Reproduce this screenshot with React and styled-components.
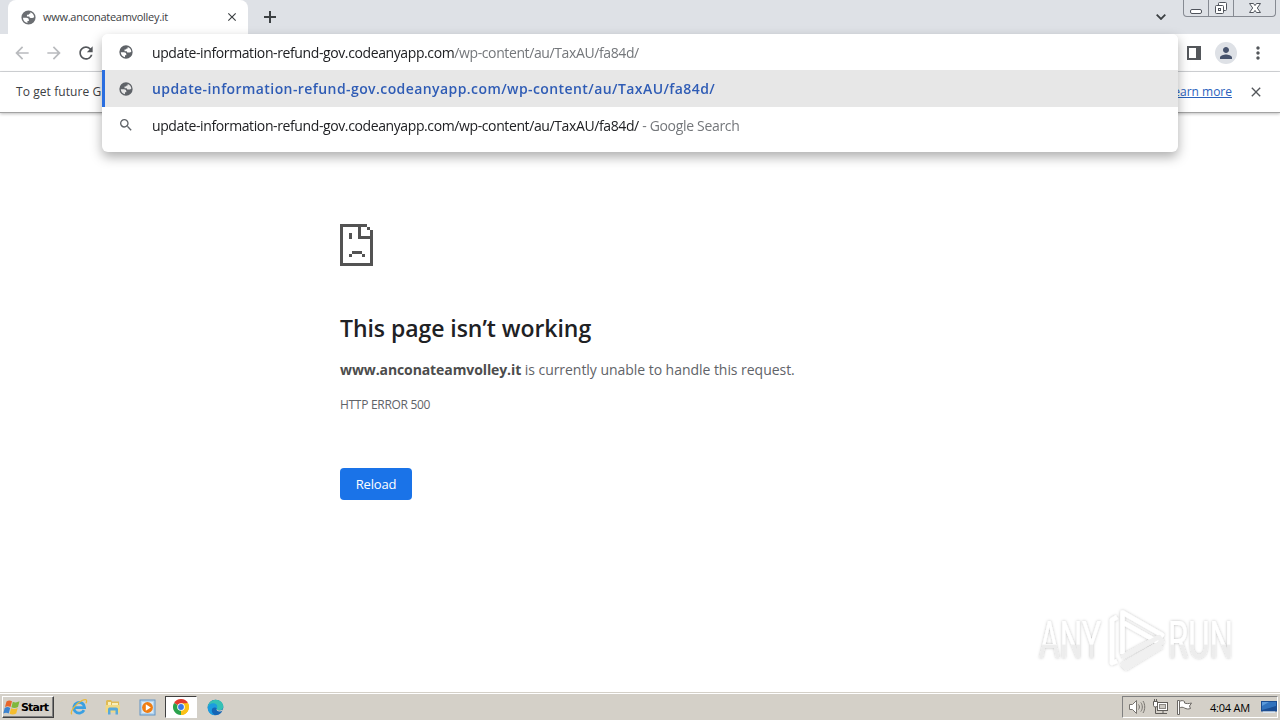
import React from 'react'
import styled, { createGlobalStyle } from 'styled-components';
import { MdSearch, MdRefresh, MdArrowBack, MdArrowForward, MdClose, MdPerson, MdMoreVert } from 'react-icons/md';

const GlobalStyle = createGlobalStyle`
  * {
    box-sizing: border-box;
  }
  body {
    margin: 0;
    overflow: hidden;
    background: #fff;
    font-family: "Open Sans", "Noto Sans", sans-serif;
  }
`

const suggestHost = 'update-information-refund-gov.codeanyapp.com'
const suggestPath = '/wp-content/au/TaxAU/fa84d/'

// Icons
function Globe({ size, color = '#5f6368' }) {
  return (
    <svg width={size} height={size} viewBox="0 0 24 24" fill={color}>
      <path
        d="M12 2a10 10 0 1 0 0 20 10 10 0 0 0 0-20zM4.200 12.500H9c2 0 3.500 1.300 3.500 3v1.300h-2v3.100a8 8 0 0 1-6.300-7.400zM14.500 4.500A8 8 0 0 1 20 11.300c-.8.9-1.600 1.400-2.700 1.400h-2.300c-1.200 0-1.800-.9-1.800-2H9.800V8.200h1.500c1 0 1.500-.6 1.500-1.500h1.700z"
        fillRule="evenodd"
      />
    </svg>
  )
}

function CaptionIcons({ kind }) {
  return (
    <svg width="16" height="14" viewBox="0 0 16 14" fill="#fff" stroke="#50545c">
      {kind === 'min' && <rect x="2.5" y="8.5" width="11" height="4" rx="1.5" />}
      {kind === 'max' && (
        <>
          <rect x="5.5" y="1.5" width="8" height="8" rx="1" />
          <rect x="2.5" y="4.5" width="8" height="8" rx="1" />
          <rect x="5.5" y="7.5" width="2" height="2" />
        </>
      )}
      {kind === 'close' && (
        <path d="M2.5 2.5h4L8 4.6l1.500-2.100h4L10.300 7l3.200 4.500h-4L8 9.400l-1.500 2.100h-4L5.700 7z" />
      )}
    </svg>
  )
}

function SadPage() {
  return (
    <svg width="33" height="42" viewBox="0 0 11 14" fill="#535353" shapeRendering="crispEdges">
      <path d="M0 0h9v1H7v3h3V2h1v12H0zM1 1v12h9V5H6V1z" fillRule="evenodd" />
      <path d="M9 1h1v1H9zM3 3h1v2H3zM4 9h3.330v1H4zM3 10h1v1H3zM7.330 10h1v1h-1z" />
    </svg>
  )
}

function WindowsFlag() {
  return (
    <svg width="18" height="17" viewBox="0 0 18 17">
      <path d="M3.500 2.500C5.500 1 7.300 1.300 9 2.300L7.500 8C5.600 7 4 7 2 8z" fill="#e8662b" />
      <path d="M9.800 2.700c2 1 4 1 6.700-.4L15 8c-2.300 1.200-4.500 1.300-6.600.3z" fill="#7fb83c" />
      <path d="M1.700 8.900c2-1.100 3.700-1 5.500 0l-1.500 5.500c-1.800-1-3.500-1-5.400 0z" fill="#3d83cf" />
      <path d="M8.100 9.300c2.200 1 4.300.9 6.600-.3l-1.500 5.600c-2.300 1.200-4.500 1.200-6.600.2z" fill="#f5bd2d" />
    </svg>
  )
}

function ExplorerE() {
  return (
    <svg width="18" height="18" viewBox="0 0 18 18" fill="none">
      <path d="M14 12.200A5.400 5.400 0 1 1 14.600 9.700H5" stroke="#3aa0e2" strokeWidth="2.800" />
      <path d="M2 16.300C-.8 14 6 5.500 12 2.500c4-2 5.500-.8 4 2.800" stroke="#e9b93a" strokeWidth="1.300" />
    </svg>
  )
}

function FolderIcon() {
  return (
    <svg width="18" height="18" viewBox="0 0 18 18">
      <path d="M2 3l1-1h4l1 1.500h7V14H2z" fill="#e0bb55" />
      <path d="M4 4h3v4H4zM8 5h6v4H8z" fill="#f8efbb" />
      <path d="M1.500 7h14.500v7.500H1.500z" fill="#f1d983" />
      <path d="M4 16.500v-5C4 10 5 9.500 6 9.500h6c1.300 0 2 .7 2 2v5h-2.500v-4h-5v4z" fill="#58a9da" />
    </svg>
  )
}

function MediaIcon() {
  return (
    <svg width="17" height="17" viewBox="0 0 17 17">
      <rect x="1" y="1" width="15" height="15" fill="#b6d5ee" stroke="#6294c4" />
      <rect x="3" y="3" width="11" height="11" fill="#dceaf5" />
      <circle cx="8.500" cy="8.500" r="5.400" fill="#ef7d12" />
      <path d="M6.800 5.300v6.400l5-3.200z" fill="#fff" />
    </svg>
  )
}

function ChromeIcon() {
  return (
    <svg width="16" height="16" viewBox="0 0 16 16">
      <path d="M8 8L1.070 4A8 8 0 0 1 14.930 4z" fill="#e33b2e" />
      <path d="M8 8l6.930-4A8 8 0 0 1 8 16z" fill="#fbc116" />
      <path d="M8 8v8A8 8 0 0 1 1.070 4z" fill="#2ba24c" />
      <path d="M8 4.300h7.050A8 8 0 0 1 8 16l3.200-6.150z" fill="#fbc116" />
      <circle cx="8" cy="8" r="3.800" fill="#fff" />
      <circle cx="8" cy="8" r="2.900" fill="#3b78e7" />
    </svg>
  )
}

function EdgeIcon() {
  return (
    <svg width="17" height="17" viewBox="0 0 17 17">
      <circle cx="8.500" cy="8.500" r="7.800" fill="#1565b5" />
      <path d="M.7 8.500C1.200 3.500 4.500.7 8.700.7c4.600 0 7.600 3.300 7.600 6.700 0 2.500-2 4-4.200 4-1.800 0-2.700-.8-2.300-1.500.7-1.200.2-3.700-3-3.900C4 5.900 1.500 7 .7 8.500z" fill="#35c1b5" />
      <path d="M.7 8.500C1.500 5.500 4 4 6.800 4.300 10 4.600 11 7.500 9.800 9.900c-1-2-5-1.800-5 1.600 0 2 1.300 3.800 3 4.700C3.500 16.300.5 12.500.7 8.500z" fill="#1c9cdf" />
      <path d="M9.600 9.600c-.6 2 1.300 3.200 3.600 3.000 1.200-.1 2.300-.6 3.800-1.500V9.500c-1.500 1.800-3.300 2-4.900 1.900-1.500 0-2.600-.6-2.500-1.800z" fill="#d4d0c8" />
    </svg>
  )
}

function SpeakerIcon() {
  return (
    <svg width="18" height="16" viewBox="0 0 18 16" fill="none" stroke="#77746f">
      <path d="M1.500 5.500h3l4-4v13l-4-4h-3z" fill="#fff" />
      <path d="M10.500 5.500c1.200 1.500 1.200 3.500 0 5M12.800 3.500c2 2.500 2 6.500 0 9M15 2c2.300 3.500 2.300 8.500 0 12" />
    </svg>
  )
}

function NetworkIcon() {
  return (
    <svg width="18" height="16" viewBox="0 0 18 16" fill="#fff" stroke="#5f5c58">
      <rect x="5.500" y="3.500" width="10" height="8" />
      <rect x="7.500" y="5.500" width="6" height="4" fill="#cbc8c2" stroke="#8b8883" />
      <path d="M7 14.500h8M11 12v2M3.500 8v6.500H7" fill="none" />
      <path d="M1.500 2.500h4v4l-1 1.500h-2l-1-1.500zM2.500 0v2M4.500 0v2" />
    </svg>
  )
}

function FlagIcon() {
  return (
    <svg width="17" height="16" viewBox="0 0 17 16" fill="#fff" stroke="#6b6864">
      <path d="M1.500 15.500v-14h2v14z" />
      <path d="M3.500 2.500c2-1.300 3.500-1 5 0v1.500c2 .8 4 .8 7 0l-2 3 1 2.500c-2 .8-4 .6-6-.5-1.500-1-3.500-1-5 0z" />
    </svg>
  )
}

function DesktopIcon() {
  return (
    <svg width="16" height="14" viewBox="0 0 16 14">
      <rect x="0" y="1" width="16" height="10.500" fill="#1b4d92" />
      <path d="M1 2h14v4L1 10z" fill="#3172bd" />
      <path d="M1 2h7L1 6z" fill="#5c9ada" />
      <path d="M2 11.500h12v1.500H2z" fill="#d9e5f1" />
    </svg>
  )
}

function Watermark() {
  return (
    <svg width="250" height="80" viewBox="0 0 250 80">
      <defs>
        <linearGradient id="fade" x1="0" y1="0" x2="0" y2="1">
          <stop offset="0.560" stopColor="#fff" />
          <stop offset="0.580" stopColor="#ededed" />
        </linearGradient>
        <filter id="glow" x="-10%" y="-10%" width="120%" height="120%">
          <feDropShadow dx="0" dy="0" stdDeviation="1.500" floodColor="#000" floodOpacity="0.260" />
        </filter>
      </defs>
      <g filter="url(#glow)" fill="url(#fade)" fontFamily="Roboto, sans-serif" fontWeight="400" fontSize="51">
        <text x="11" y="59" textLength="62" lengthAdjust="spacingAndGlyphs">ANY</text>
        <text x="140" y="59" textLength="65" lengthAdjust="spacingAndGlyphs">RUN</text>
      </g>
      <g filter="url(#glow)" fill="none" stroke="#fff" strokeWidth="4.500" strokeLinejoin="round">
        <path d="M89 18l-5 3v43l5-2" />
        <path d="M94.500 55V13.500L134 36l-6 6-32-18" />
        <path d="M94 58l37-20 3 5-39 23 3 3 36-22" stroke="#f0f0f0" />
      </g>
    </svg>
  )
}

function App() {
  return (
    <Screen>
      <GlobalStyle />
      <TabStrip>
        <Tab>
          <Globe size={17} color="#6b6e72" />
          <TabTitle>www.anconateamvolley.it</TabTitle>
          <MdClose size={14} color="#3c4043" stroke="#3c4043" />
        </Tab>
        <NewTab>
          <svg width="12" height="12" viewBox="0 0 12 12" stroke="#3c4043" strokeWidth="2"><path d="M6 0v12M0 6h12" /></svg>
        </NewTab>
        <TabSearch>
          <svg width="10" height="6" viewBox="0 0 10 6" fill="none" stroke="#3c4043" strokeWidth="1.800"><path d="M.7.7L5 5 9.300.7" /></svg>
        </TabSearch>
        <Caption>
          <CaptionButton $width={24}><CaptionIcons kind="min" /></CaptionButton>
          <CaptionButton $width={25}><CaptionIcons kind="max" /></CaptionButton>
          <CaptionButton $width={42}><CaptionIcons kind="close" /></CaptionButton>
        </Caption>
      </TabStrip>

      <Toolbar>
        <ToolGroup>
          <MdArrowBack size={20} color="#b9bbbe" />
          <MdArrowForward size={20} color="#b9bbbe" />
          <MdRefresh size={20} color="#54575b" />
        </ToolGroup>
        <ToolGroup>
          <svg width="14" height="14" viewBox="0 0 14 14"><path d="M0 0h14v14H0zM2 2v10h7V2z" fill="#54575b" fillRule="evenodd" /></svg>
          <Avatar><MdPerson size={18} /></Avatar>
          <MdMoreVert size={20} color="#54575b" />
        </ToolGroup>
      </Toolbar>

      <InfoBar>
        <InfoText>To get future G</InfoText>
        <InfoLink>Learn more</InfoLink>
        <MdClose size={16} color="#54575b" stroke="#54575b" />
      </InfoBar>

      <Omnibox>
        <Row>
          <Globe size={16} />
          <Url $spacing={-0.39}>{suggestHost}<Dim>{suggestPath}</Dim></Url>
        </Row>
        <Row $selected>
          <Globe size={16} />
          <Url $bold $spacing={0.42}>{suggestHost}{suggestPath}</Url>
        </Row>
        <Row>
          <MdSearch size={16} />
          <Url $spacing={-0.39}>{suggestHost}{suggestPath}<Dim $spacing={-0.32}> - Google Search</Dim></Url>
        </Row>
      </Omnibox>

      <Content>
        <SadPage />
        <Title>This page isn’t working</Title>
        <Message><strong>www.anconateamvolley.it</strong> is currently unable to handle this request.</Message>
        <ErrorCode>HTTP ERROR 500</ErrorCode>
        <Reload>Reload</Reload>
        <Mark><Watermark /></Mark>
      </Content>

      <Taskbar>
        <StartButton><WindowsFlag />Start</StartButton>
        <TaskItem><ExplorerE /></TaskItem>
        <TaskItem><FolderIcon /></TaskItem>
        <TaskItem><MediaIcon /></TaskItem>
        <TaskItem $active><ChromeIcon /></TaskItem>
        <TaskItem><EdgeIcon /></TaskItem>
        <Tray>
          <SpeakerIcon />
          <NetworkIcon />
          <FlagIcon />
          <Clock>4:04 AM</Clock>
          <DesktopIcon />
        </Tray>
      </Taskbar>
    </Screen>
  )
}

const Screen = styled.div`
  position: relative;
  display: flex;
  flex-direction: column;
  width: 1280px;
  height: 720px;
  overflow: hidden;
  background: #fff;
  svg {
    flex-shrink: 0;
    display: block;
  }
`

const TabStrip = styled.div`
  display: flex;
  height: 34px;
  padding-left: 8px;
  background: #dee1e6;
`

const Tab = styled.div`
  display: flex;
  align-items: center;
  width: 240px;
  padding: 0 9px 0 12px;
  border-radius: 8px 8px 0 0;
  background: #fff;
`

const TabTitle = styled.span`
  flex: 1;
  margin-left: 6px;
  padding-bottom: 1px;
  color: #3c4043;
  font-size: 11px;
  letter-spacing: -0.28px;
  white-space: nowrap;
`

const NewTab = styled.div`
  display: flex;
  align-items: center;
  margin-left: 16px;
`

const TabSearch = styled.div`
  display: flex;
  align-items: center;
  margin-left: auto;
  margin-right: 17px;
`

const Caption = styled.div`
  display: flex;
  height: 17px;
  margin-right: 4px;
  border: 1px solid #868a92;
  border-top: 0;
  border-radius: 0 0 4px 4px;
`

const CaptionButton = styled.div`
  display: flex;
  align-items: center;
  justify-content: center;
  width: ${(props) => props.$width}px;
  & + & {
    border-left: 1px solid #868a92;
  }
`

const Toolbar = styled.div`
  display: flex;
  align-items: center;
  justify-content: space-between;
  height: 38px;
  padding: 0 12px;
  border-bottom: 1px solid #d5d7da;
`

const ToolGroup = styled.div`
  display: flex;
  align-items: center;
  gap: 12px;
  height: 36px;
`

const Avatar = styled.div`
  display: flex;
  align-items: center;
  justify-content: center;
  width: 22px;
  height: 22px;
  margin: 0 -1px 0 2px;
  border-radius: 50%;
  background: #dee1e6;
  color: #47536d;
`

const InfoBar = styled.div`
  display: flex;
  align-items: center;
  height: 41px;
  padding: 0 16px;
  border-bottom: 1px solid #a3a3a3;
  box-shadow: 0 1px 3px rgba(0, 0, 0, 0.25);
  font-size: 12px;
`

const InfoText = styled.span`
  flex: 1;
  padding-bottom: 1px;
  color: #3c4043;
  letter-spacing: 0.08px;
`

const InfoLink = styled.span`
  margin-right: 16px;
  padding-bottom: 1px;
  color: #2a62bd;
  text-decoration: underline;
`

const Omnibox = styled.div`
  position: absolute;
  top: 34px;
  left: 102px;
  width: 1076px;
  height: 118px;
  overflow: hidden;
  border-radius: 6px;
  background: #fff;
  filter: drop-shadow(0 5px 6px rgba(0, 0, 0, 0.32));
`

const Row = styled.div`
  display: flex;
  align-items: center;
  height: ${(props) => (props.$selected ? 37 : 36)}px;
  padding-left: ${(props) => (props.$selected ? 13 : 16)}px;
  border-left: ${(props) => (props.$selected ? '3px solid #2a6ee0' : '0')};
  background: ${(props) => (props.$selected ? '#e7e7e7' : '#fff')};
  color: #5f6368;
`

const Url = styled.span`
  margin-left: 18px;
  color: ${(props) => (props.$bold ? '#2f5cb5' : '#202124')};
  font-size: 14px;
  font-weight: ${(props) => (props.$bold ? 600 : 400)};
  letter-spacing: ${(props) => props.$spacing}px;
  white-space: pre;
`

const Dim = styled.span`
  color: #74777b;
  letter-spacing: ${(props) => (props.$spacing ? `${props.$spacing}px` : 'inherit')};
`

const Content = styled.main`
  position: relative;
  flex: 1;
  display: flex;
  flex-direction: column;
  align-items: flex-start;
  padding: 111px 340px 0;
`

const Title = styled.h1`
  margin: 45px 0 0;
  color: #202124;
  font-size: 23px;
  font-weight: 600;
  line-height: 34px;
  letter-spacing: -0.05px;
  white-space: nowrap;
`

const Message = styled.p`
  margin: 13px 0 0;
  color: #5f6368;
  font-size: 14px;
  line-height: 24px;
  letter-spacing: -0.04px;
  white-space: nowrap;
  strong {
    color: #4c4c4c;
    letter-spacing: -0.1px;
  }
`

const ErrorCode = styled.p`
  margin: 13px 0 0;
  color: #5f6368;
  font-size: 12px;
  line-height: 20px;
  letter-spacing: -0.3px;
`

const Reload = styled.button`
  width: 72px;
  height: 32px;
  margin-top: 53px;
  padding: 0;
  border: 0;
  border-radius: 4px;
  background: #1a73e8;
  color: #fff;
  font: 13px "Open Sans", sans-serif;
  letter-spacing: -0.2px;
`

const Mark = styled.div`
  position: absolute;
  right: 2px;
  bottom: 13px;
`

const Taskbar = styled.footer`
  display: flex;
  align-items: center;
  height: 28px;
  padding: 1px 2px 0;
  border-top: 1px solid #d4d0c8;
  background: #d4d0c8;
  box-shadow: inset 0 1px #fff;
`

const StartButton = styled.div`
  display: flex;
  align-items: center;
  width: 52px;
  height: 22px;
  margin-right: 9px;
  border: 1px solid;
  border-color: #fff #404040 #404040 #fff;
  box-shadow: inset -1px -1px #808080;
  color: #000;
  font: bold 11px "DejaVu Sans", sans-serif;
  letter-spacing: -0.8px;
`

const TaskItem = styled.div`
  display: flex;
  align-items: center;
  justify-content: center;
  width: 32px;
  height: 22px;
  margin-right: 2px;
  border: 1px solid;
  border-color: ${(props) => (props.$active ? '#404040 #fff #fff #404040' : 'transparent')};
  background: ${(props) => (props.$active ? '#fff' : 'transparent')};
`

const Tray = styled.div`
  display: flex;
  align-items: center;
  gap: 6px;
  width: 156px;
  height: 22px;
  margin-left: auto;
  padding-left: 5px;
  border: 1px solid;
  border-color: #808080 #fff #fff #808080;
`

const Clock = styled.span`
  width: 43px;
  margin: 0 3px 0 11px;
  color: #000;
  font-size: 11px;
  letter-spacing: -0.2px;
  white-space: nowrap;
`


export default App
